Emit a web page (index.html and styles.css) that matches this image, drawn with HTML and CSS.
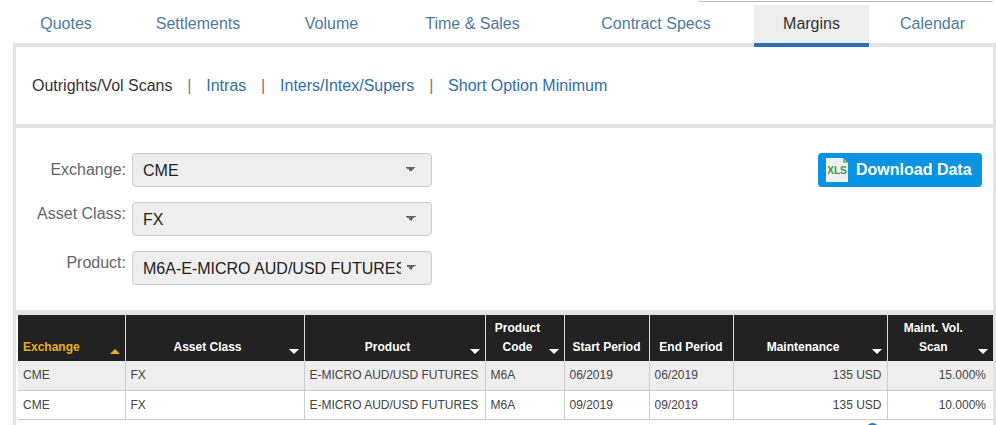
FILE: index.html
```html
<!DOCTYPE html>
<html lang="en">
  <head>
    <meta charset="UTF-8" />
    <meta name="viewport" content="width=device-width, initial-scale=1.0" />
    <title>Margins</title>

    <link rel="stylesheet" href="styles.css">
  </head>
  <body>
    <div class="top-edge"></div>

    <nav class="tabs">
      <a class="tab">Quotes</a>
      <a class="tab">Settlements</a>
      <a class="tab">Volume</a>
      <a class="tab">Time &amp; Sales</a>
      <a class="tab">Contract Specs</a>
      <a class="tab active">Margins</a>
      <a class="tab">Calendar</a>
    </nav>

    <div class="panel">
      <div class="subnav">
        <span class="current">Outrights/Vol Scans</span>
        <span class="sep">|</span>
        <a>Intras</a>
        <span class="sep">|</span>
        <a>Inters/Intex/Supers</a>
        <span class="sep">|</span>
        <a>Short Option Minimum</a>
      </div>

      <div class="filters">
        <form class="fields">
          <label class="field-label">Exchange:</label>
          <select class="field-select"><option>CME</option></select>
          <label class="field-label raised">Asset Class:</label>
          <select class="field-select"><option>FX</option></select>
          <label class="field-label raised">Product:</label>
          <select class="field-select"><option>M6A-E-MICRO AUD/USD FUTURES</option></select>
        </form>

        <button class="download" type="button">
          <svg width="22" height="24" viewBox="0 0 22 24">
            <path d="M0 0H17L22 5V24H0Z" fill="#f1f1f1" />
            <path d="M17 0L22 5H17Z" fill="#7cc576" />
            <text x="11" y="16" text-anchor="middle" class="xls">XLS</text>
          </svg>
          Download Data
        </button>
      </div>

      <div class="table-wrap">
        <table class="margins">
          <colgroup>
            <col class="c-exchange" />
            <col class="c-asset" />
            <col class="c-product" />
            <col class="c-code" />
            <col class="c-start" />
            <col class="c-end" />
            <col class="c-maint" />
            <col class="c-scan" />
          </colgroup>
          <thead>
            <tr>
              <th class="sorted sort-up">Exchange</th>
              <th class="sort-down">Asset Class</th>
              <th class="sort-down">Product</th>
              <th class="sort-down">Product<br />Code</th>
              <th>Start Period</th>
              <th>End Period</th>
              <th class="sort-down">Maintenance</th>
              <th class="sort-down">Maint. Vol.<br />Scan</th>
            </tr>
          </thead>
          <tbody>
            <tr>
              <td>CME</td>
              <td>FX</td>
              <td>E-MICRO AUD/USD FUTURES</td>
              <td>M6A</td>
              <td>06/2019</td>
              <td>06/2019</td>
              <td class="num">135 USD</td>
              <td class="num">15.000%</td>
            </tr>
            <tr>
              <td>CME</td>
              <td>FX</td>
              <td>E-MICRO AUD/USD FUTURES</td>
              <td>M6A</td>
              <td>09/2019</td>
              <td>09/2019</td>
              <td class="num">135 USD</td>
              <td class="num">10.000%</td>
            </tr>
          </tbody>
        </table>
      </div>
    </div>

    <div class="blue-dot"></div>
  </body>
</html>
```

FILE: styles.css
```css
*,
*::before,
*::after {
  box-sizing: border-box;
  padding: 0;
  margin: 0;
}

html,
body {
  height: 425px;
  overflow: hidden;
}

body {
  position: relative;
  background-color: #fff;
  font-family: "Liberation Sans", Arial, sans-serif;
  font-size: 16px;
}

.top-edge {
  height: 2px;
  margin: 0 3px 3px 698px;
  background-color: #fff;
  border-bottom: 1px solid #bbb;
  border-radius: 0 0 4px 4px;
}

/* tabs */
.tabs {
  display: grid;
  grid-template-columns: 108px 156px 111px 171px 196px 115px 127px;
  align-items: start;
  height: 38px;
  padding-left: 12px;
}
.tab {
  display: flex;
  justify-content: center;
  padding-top: 10px;
  line-height: 18px;
  color: #4f7aa0;
}
.tab.active {
  position: relative;
  height: 42px;
  background-color: #eee;
  border-bottom: 4px solid #2f70b4;
  color: #333;
}

/* panel */
.panel {
  height: 382px;
  margin-left: 13px;
  border: 3px solid #e4e4e4;
  border-top-width: 4px;
  border-bottom: 0;
}

.subnav {
  display: flex;
  align-items: center;
  height: 81px;
  padding-left: 16px;
  border-bottom: 4px solid #e4e4e4;
  color: #336e9f;
}
.subnav .current {
  color: #333;
}
.subnav .sep {
  margin: 0 14.8px;
  color: #777;
}

/* filters */
.filters {
  display: flex;
  justify-content: space-between;
  align-items: flex-start;
  height: 183px;
  padding: 25px 11px 0 0;
  border-bottom: 1px solid #f6f6f6;
}
.fields {
  display: grid;
  grid-template-columns: 110px 300px;
  column-gap: 6px;
  row-gap: 15px;
}
.field-label {
  padding-top: 8px;
  line-height: 18px;
  text-align: right;
  color: #666;
}
.field-label.raised {
  padding-top: 3px;
}
.field-select {
  appearance: none;
  height: 34px;
  padding: 0 30px 0 10px;
  border: 1px solid #ccc;
  border-radius: 4px;
  background-color: #eee;
  background-image: linear-gradient(45deg, transparent 50%, #666 50%),
    linear-gradient(-45deg, transparent 50%, #666 50%);
  background-position: 273px 13px, 278px 13px;
  background-size: 5px 5px;
  background-repeat: no-repeat;
  font-family: inherit;
  font-size: 16px;
  color: #222;
}

.download {
  display: flex;
  align-items: center;
  gap: 8px;
  width: 164px;
  height: 34px;
  padding-left: 8px;
  border: 0;
  border-radius: 4px;
  background-color: #0a93e2;
  font-family: inherit;
  font-size: 16px;
  font-weight: bold;
  color: #fff;
}
.xls {
  font-family: "Liberation Sans", Arial, sans-serif;
  font-size: 10px;
  font-weight: bold;
  fill: #2f9e44;
}

/* table */
.table-wrap {
  margin-top: -1px;
  padding-left: 2px;
  border-top: 5px solid #e4e4e4;
}
.margins {
  width: 975px;
  table-layout: fixed;
  border-collapse: collapse;
  font-size: 12px;
}
.c-exchange { width: 107px; }
.c-asset { width: 179px; }
.c-product { width: 181px; }
.c-code { width: 79px; }
.c-start { width: 85px; }
.c-end { width: 84px; }
.c-maint { width: 154px; }
.c-scan { width: 106px; }

.margins th {
  position: relative;
  height: 46px;
  padding: 0 2px 4px;
  vertical-align: bottom;
  background-color: #222;
  border-left: 1px solid #ddd;
  font-weight: bold;
  line-height: 19px;
  text-align: center;
  color: #fff;
}
.margins th:first-child {
  border-left: 0;
}
.margins th.sort-down {
  padding-right: 16px;
}
.margins th.sorted {
  padding-left: 5px;
  text-align: left;
  color: #e9b120;
}
.sort-down::after,
.sort-up::after {
  content: "";
  position: absolute;
  right: 5px;
  bottom: 7px;
  border-left: 5px solid transparent;
  border-right: 5px solid transparent;
}
.sort-down::after {
  border-top: 5px solid #fff;
}
.sort-up::after {
  border-bottom: 5px solid #e9b120;
}

.margins td {
  height: 29px;
  padding: 0 5px;
  border: 1px solid #ccc;
  border-top: 0;
  color: #444;
  white-space: nowrap;
}
.margins td:first-child {
  border-left: 0;
}
.margins td:last-child {
  padding-right: 7px;
  border-right: 0;
}
.margins tbody tr:first-child td {
  background-color: #eee;
}
.margins td.num {
  text-align: right;
}

.blue-dot {
  position: absolute;
  left: 866px;
  top: 423px;
  width: 13px;
  height: 13px;
  border: 2px solid #1f7fc0;
  border-radius: 50%;
}
```
